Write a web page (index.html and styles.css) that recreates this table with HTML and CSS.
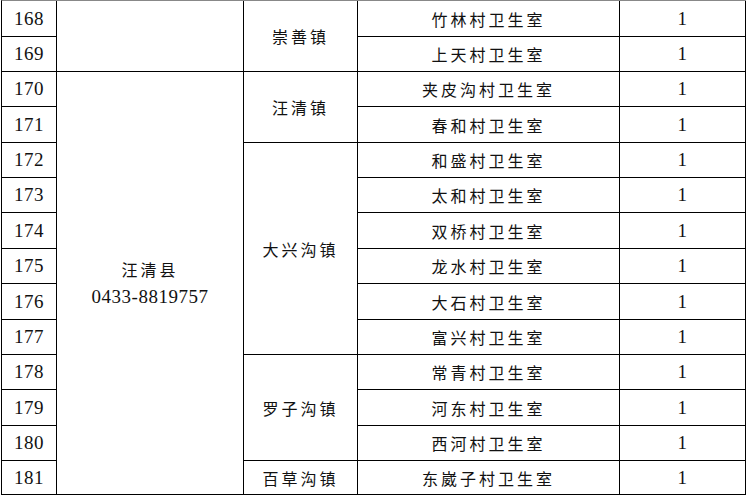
FILE: index.html
```html
<!DOCTYPE html>
<html lang="zh-CN">
<head>
<meta charset="utf-8">
<title>汪清县 村卫生室</title>
<link rel="stylesheet" href="styles.css">
</head>
<body>
<div class="grid">
  <div class="cell n">168</div>
  <div class="cell span2"></div>
  <div class="cell c span2">崇善镇</div>
  <div class="cell c">竹林村卫生室</div>
  <div class="cell n">1</div>

  <div class="cell n">169</div>
  <div class="cell c">上天村卫生室</div>
  <div class="cell n">1</div>

  <div class="cell n">170</div>
  <div class="cell county span12">
    <div class="c">汪清县</div>
    <div class="n">0433-8819757</div>
  </div>
  <div class="cell c span2">汪清镇</div>
  <div class="cell c">夹皮沟村卫生室</div>
  <div class="cell n">1</div>

  <div class="cell n">171</div>
  <div class="cell c">春和村卫生室</div>
  <div class="cell n">1</div>

  <div class="cell n">172</div>
  <div class="cell c span6">大兴沟镇</div>
  <div class="cell c">和盛村卫生室</div>
  <div class="cell n">1</div>

  <div class="cell n">173</div>
  <div class="cell c">太和村卫生室</div>
  <div class="cell n">1</div>

  <div class="cell n">174</div>
  <div class="cell c">双桥村卫生室</div>
  <div class="cell n">1</div>

  <div class="cell n">175</div>
  <div class="cell c">龙水村卫生室</div>
  <div class="cell n">1</div>

  <div class="cell n">176</div>
  <div class="cell c">大石村卫生室</div>
  <div class="cell n">1</div>

  <div class="cell n">177</div>
  <div class="cell c">富兴村卫生室</div>
  <div class="cell n">1</div>

  <div class="cell n">178</div>
  <div class="cell c span3">罗子沟镇</div>
  <div class="cell c">常青村卫生室</div>
  <div class="cell n">1</div>

  <div class="cell n">179</div>
  <div class="cell c">河东村卫生室</div>
  <div class="cell n">1</div>

  <div class="cell n">180</div>
  <div class="cell c">西河村卫生室</div>
  <div class="cell n">1</div>

  <div class="cell n">181</div>
  <div class="cell c">百草沟镇</div>
  <div class="cell c">东崴子村卫生室</div>
  <div class="cell n">1</div>
</div>
</body>
</html>
```
FILE: styles.css
```css
html, body {
  margin: 0;
  padding: 0;
  background: #fff;
}

body {
  color: #111;
}

.grid {
  display: grid;
  grid-template-columns: 55px 187px 114px 262px 126px;
  grid-template-rows: 36px 35px 35px 36px 35px 35px 36px 35px 36px 35px 35px 36px 35px 34px;
  margin-left: 1px;
  width: max-content;
  border-left: 1px solid #000;
  border-top: 1px solid #888;
}

.cell {
  box-sizing: border-box;
  border-right: 1px solid #000;
  border-bottom: 1px solid #000;
  display: flex;
  align-items: center;
  justify-content: center;
  white-space: nowrap;
}

.span2 { grid-row: span 2; }
.span3 { grid-row: span 3; }
.span6 { grid-row: span 6; }
.span12 { grid-row: span 12; }

.n {
  font-family: "Liberation Serif", serif;
  font-size: 19px;
  letter-spacing: 0.5px;
}

.c {
  font-family: "Noto Sans CJK SC", sans-serif;
  font-size: 16px;
  letter-spacing: 3px;
}

.county {
  flex-direction: column;
  line-height: 27px;
}
```
